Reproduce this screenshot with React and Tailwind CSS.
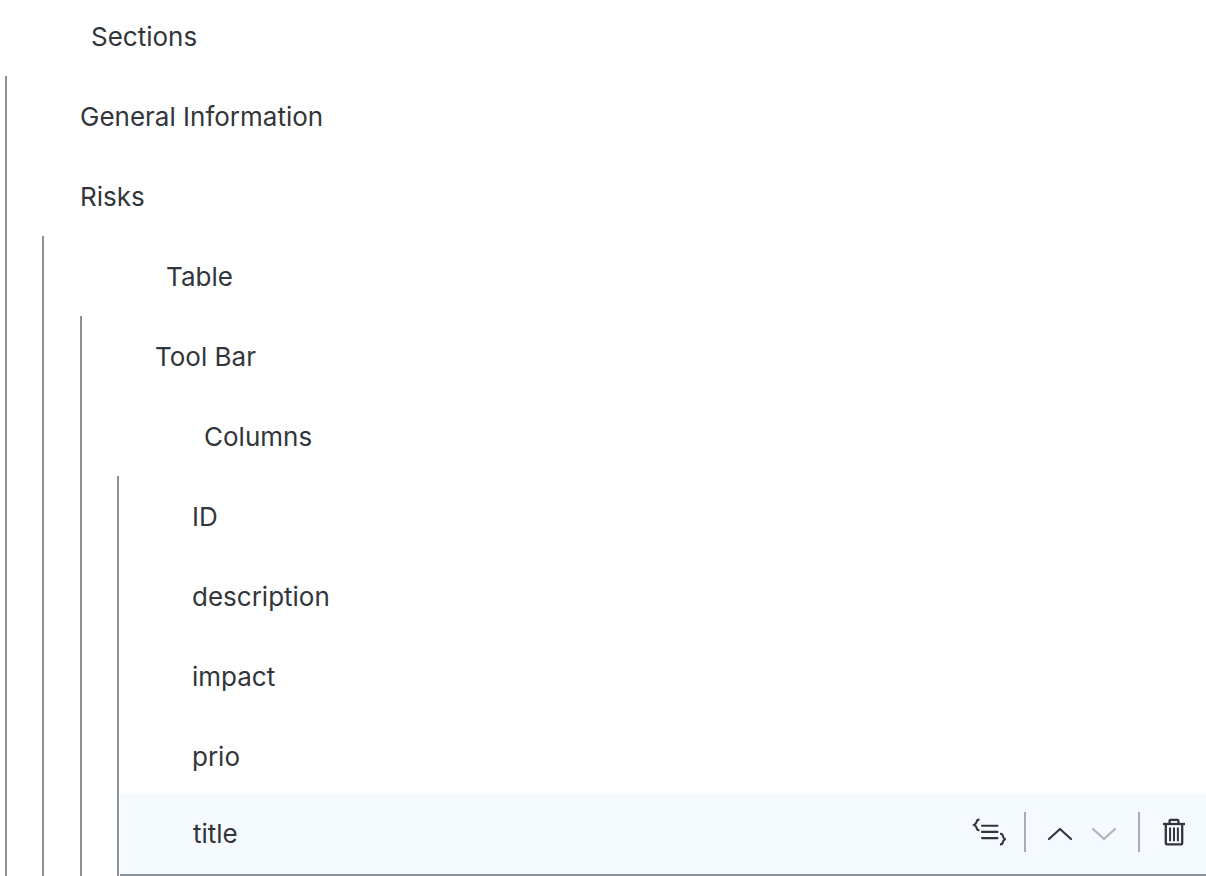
const tree = {
  label: "Sections",
  group: true,
  children: [
    { label: "General Information" },
    {
      label: "Risks",
      children: [
        {
          label: "Table",
          group: true,
          children: [
            { label: "Tool Bar" },
            {
              label: "Columns",
              group: true,
              children: [
                { label: "ID" },
                { label: "description" },
                { label: "impact" },
                { label: "prio", short: true },
                { label: "title", selected: true },
              ],
            },
          ],
        },
      ],
    },
  ],
};

function SourceIcon() {
  return (
    <svg width="34" height="28" viewBox="0 0 34 28" fill="none" stroke="#32363a" strokeWidth="2.1" aria-hidden="true">
      <path d="M7.5 1.6Q5 1.4 4.7 3.6Q4.4 5.6 2.1 6.9Q4.4 8.2 4.7 10.2Q5 12.4 7.5 12.2" />
      <path d="M10 7.7H25.5M10 13.9H25.5M10 20.1H25.5" strokeLinecap="round" />
      <path d="M28 15.8Q30.5 15.6 30.8 17.8Q31.1 19.8 33 21.1Q31.1 22.4 30.8 24.4Q30.5 26.6 28 26.4" />
    </svg>
  );
}

function ChevronIcon({ down }) {
  return (
    <svg width="26" height="14" viewBox="0 0 26 14" fill="none" stroke="currentColor" strokeWidth="2.2" strokeLinecap="round" strokeLinejoin="round" aria-hidden="true">
      <path d={down ? "M2 2L13 12L24 2" : "M2 12L13 2L24 12"} />
    </svg>
  );
}

function TrashIcon() {
  return (
    <svg width="24" height="28" viewBox="0 0 24 28" fill="none" stroke="#32363a" strokeWidth="2.3" aria-hidden="true">
      <path d="M1 6H23" />
      <path d="M3.8 6V25.4Q3.8 26.4 4.8 26.4H19.2Q20.2 26.4 20.2 25.4V6" />
      <path d="M7.6 6V2.9Q7.6 1.9 8.6 1.9H15.4Q16.4 1.9 16.4 2.9V6" />
      <path d="M8.1 9.5V23.2M12 9.5V23.2M15.9 9.5V23.2" strokeWidth="2" />
    </svg>
  );
}

function Actions() {
  return (
    <div className="flex items-center pr-5 pb-[5px]">
      <button type="button" aria-label="Open in source code" className="mr-[18px]">
        <SourceIcon />
      </button>
      <span className="h-10 w-0.5 bg-[#aaaeb2]" />
      <div className="flex items-center gap-[18px] px-[21px] pt-1">
        <button type="button" aria-label="Move up" className="text-[#32363a]">
          <ChevronIcon />
        </button>
        <button type="button" aria-label="Move down" disabled className="text-[#b0b4b8]">
          <ChevronIcon down />
        </button>
      </div>
      <span className="mr-[22px] h-10 w-0.5 bg-[#aaaeb2]" />
      <button type="button" aria-label="Delete">
        <TrashIcon />
      </button>
    </div>
  );
}

function Node({ node, depth = 0 }) {
  const height = depth === 0 ? "h-[76px] pb-0.5" : node.short ? "h-[78px] pt-1" : node.selected ? "h-20" : "h-20 pt-0.5";
  const indent = !node.group ? "pl-[73px]" : depth === 0 ? "pl-[91px]" : "pl-[122px]";
  const tone = node.selected ? "ml-px box-content border-b-2 border-[#89919a] bg-[#f5faff]" : "";
  return (
    <li>
      <div className={`flex items-center justify-between ${height} ${indent} ${tone}`}>
        <span>{node.label}</span>
        {node.selected && <Actions />}
      </div>
      {node.children && (
        <ul className={`border-l-2 border-[#89919a] ${depth === 0 ? "ml-[5px]" : depth === 2 ? "ml-9" : "ml-[35px]"}`}>
          {node.children.map((child) => (
            <Node key={child.label} node={child} depth={depth + 1} />
          ))}
        </ul>
      )}
    </li>
  );
}

export default function App() {
  return (
    <main className="bg-white font-['Inter',sans-serif] text-[26px] leading-8 text-[#32363a]">
      <ul>
        <Node node={tree} />
      </ul>
    </main>
  );
}
